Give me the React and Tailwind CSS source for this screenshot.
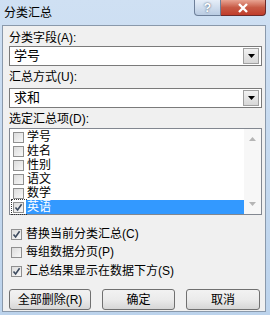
import React from 'react';

const font = { fontFamily: '"Liberation Sans", "Noto Sans CJK SC", sans-serif' };

const Box = ({ checked }) => (
  <span className="relative flex h-[11px] w-[11px] shrink-0 items-center justify-center border border-[#8f8f8f] bg-gradient-to-br from-[#dcdcdc] to-[#f8f8f8]">
    {checked && (
      <svg width="9" height="9" viewBox="0 0 9 9" className="absolute">
        <path d="M1.5 4.5 L3.6 7 L7.6 1.2" fill="none" stroke="#3c4a5e" strokeWidth="1.6" />
      </svg>
    )}
  </span>
);

const Select = ({ value }) => (
  <div className="flex h-[20px] w-[253px] items-center justify-between border border-[#7a7a7a] bg-white pl-[4px] pr-[2px]">
    <span className="text-[13px] leading-[16px] text-black">{value}</span>
    <span className="flex h-[16px] w-[16px] items-center justify-center border border-[#a0a0a0] bg-gradient-to-b from-[#f2f2f2] to-[#d8d8d8]">
      <svg width="7" height="4" viewBox="0 0 7 4">
        <path d="M0 0 H7 L3.5 4 Z" fill="#000" />
      </svg>
    </span>
  </div>
);

const items = ['学号', '姓名', '性别', '语文', '数学', '英语'];

const Button = ({ label, w }) => (
  <div className={`flex h-[21px] ${w} items-center justify-center rounded-[3px] border border-[#707070] bg-gradient-to-b from-[#f2f2f2] via-[#ebebeb] to-[#d6d6d6] text-[12px] text-black`}>
    {label}
  </div>
);

export default function App() {
  return (
    <div className="flex h-[315px] w-[270px] flex-col bg-gradient-to-b from-[#cfe0f3] to-[#bcd3ec]" style={font}>
      {/* title bar */}
      <div className="flex h-[25px] items-start justify-between">
        <span className="pl-[4px] pt-[4px] text-[12px] text-black">分类汇总</span>
        <div className="mr-[4px] flex">
          <div className="flex h-[16px] w-[27px] items-center justify-center rounded-bl-[4px] border border-t-0 border-[#6d7f99] bg-gradient-to-b from-[#e6eef8] to-[#b9cbe2] text-[12px] font-bold leading-none text-white [text-shadow:0_0_2px_#33475f]">
            ?
          </div>
          <div className="flex h-[16px] w-[45px] items-center justify-center rounded-br-[4px] border border-l-0 border-t-0 border-[#6b2a2a] bg-gradient-to-b from-[#e8a493] via-[#c75a45] to-[#c03c2c]">
            <svg width="12" height="10" viewBox="0 0 12 10">
              <path d="M2 1 L10 9 M10 1 L2 9" stroke="#fff" strokeWidth="2.4" />
            </svg>
          </div>
        </div>
      </div>

      {/* content panel */}
      <div className="ml-[2px] mr-[4px] flex h-[287px] flex-col border border-[#8a99ab] bg-[#f0f0f0] pl-[6px] pt-[5px] text-[12px] text-black">
        <div className="h-[14px] leading-[14px]">分类字段(A):</div>
        <div className="mt-[1px]"><Select value="学号" /></div>
        <div className="mt-[4px] h-[14px] leading-[14px]">汇总方式(U):</div>
        <div className="mt-[4px]"><Select value="求和" /></div>
        <div className="mt-[4px] h-[14px] leading-[14px]">选定汇总项(D):</div>

        <div className="mt-[2px] flex h-[87px] w-[253px] border border-[#828790] bg-white">
          <div className="flex flex-1 flex-col pt-[1px]">
            {items.map((it, i) => {
              const sel = i === items.length - 1;
              return (
                <div key={it} className="flex h-[14px] items-center">
                  <div className={`ml-[2px] flex h-[14px] items-center pl-[1px] pr-[2px] ${sel ? 'outline-1 outline-dotted outline-[#333]' : ''}`}>
                    <Box checked={sel} />
                  </div>
                  <div className={`flex h-[14px] flex-1 items-center pl-[1px] text-[12px] leading-[14px] ${sel ? 'bg-[#3399ff] text-white' : ''}`}>
                    {it}
                  </div>
                </div>
              );
            })}
          </div>
          <div className="flex w-[17px] flex-col items-center justify-between bg-[#f7f7f7] py-[8px]">
            <svg width="7" height="4" viewBox="0 0 7 4"><path d="M0 4 H7 L3.5 0 Z" fill="#b5b5b5" /></svg>
            <svg width="7" height="4" viewBox="0 0 7 4"><path d="M0 0 H7 L3.5 4 Z" fill="#b5b5b5" /></svg>
          </div>
        </div>

        <div className="mt-[11px] flex h-[16px] items-center gap-[4px] pl-[2px]">
          <Box checked />
          <span>替换当前分类汇总(C)</span>
        </div>
        <div className="mt-[2px] flex h-[16px] items-center gap-[4px] pl-[2px]">
          <Box />
          <span>每组数据分页(P)</span>
        </div>
        <div className="mt-[3px] flex h-[16px] items-center gap-[4px] pl-[2px]">
          <Box checked />
          <span>汇总结果显示在数据下方(S)</span>
        </div>

        <div className="mt-[10px] flex items-center">
          <Button label="全部删除(R)" w="w-[82px]" />
          <div className="ml-[11px]"><Button label="确定" w="w-[73px]" /></div>
          <div className="ml-[11px]"><Button label="取消" w="w-[74px]" /></div>
        </div>
      </div>
    </div>
  );
}
